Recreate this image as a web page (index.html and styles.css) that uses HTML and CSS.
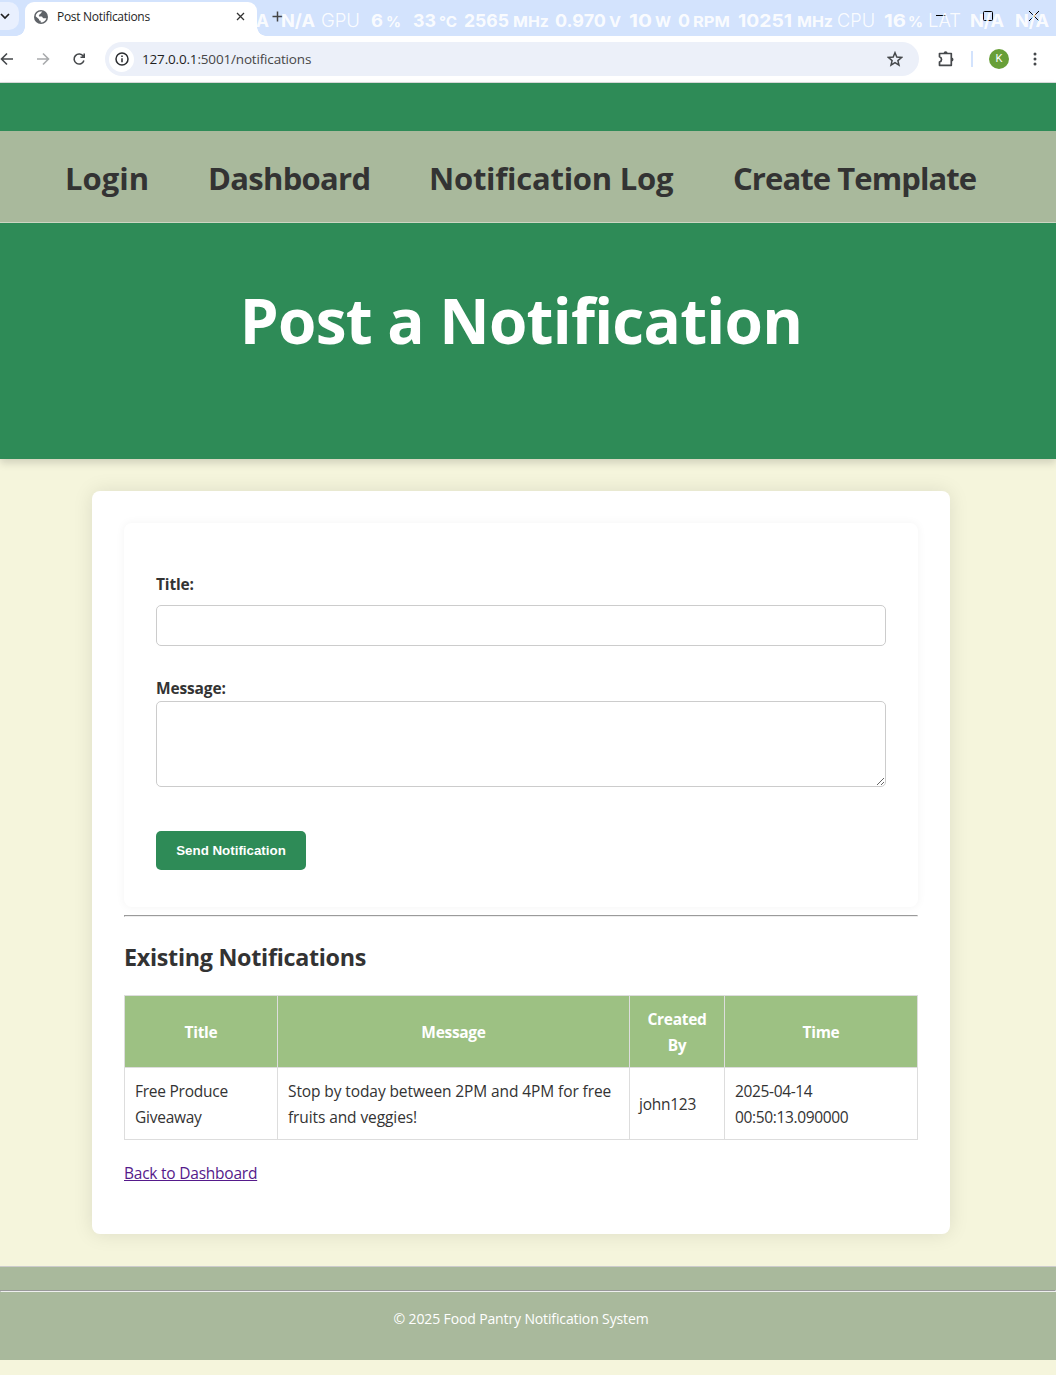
FILE: index.html
```html
<!DOCTYPE html>
<html lang="en">
<head>
<meta charset="utf-8">
<title>Post Notifications</title>
<link rel="stylesheet" href="styles.css">
</head>
<body>
<div class="browser">
  <div class="tabstrip">
    <div class="tab-search"><svg width="10" height="8" viewBox="0 0 10 8"><path d="M1 2l4 4 4-4" fill="none" stroke="#1f1f1f" stroke-width="1.7"/></svg></div>
    <div class="tab">
      <svg class="globe" width="14" height="14" viewBox="0 0 14 14"><circle cx="7" cy="7" r="7" fill="#5f6368"/><path d="M8.3 1.5C7 2.500 7.500 3.400 6.500 3.700C5.200 4 5.500 5.200 4.800 5.600L5 6.500H7.500C8.900 6.700 8.400 8.200 9.600 8.300H12.400C11.700 11 9.700 12.500 7 12.500L6.700 12.400V10.800C5.500 10.800 5 10.200 5 9.200L1.600 6.200C2 3.200 4.300 1.400 7 1.400Z" fill="#fff"/><path d="M8.300 1.700C11 2.500 12.600 4.600 12.500 7.300H10.300C10.200 5.900 9.500 5.300 8.300 5.300H6.900C7 4.300 7.500 4 8.200 3.700Z" fill="#5f6368"/></svg>
      <span class="tab-title">Post Notifications</span>
      <svg class="tab-close" width="9" height="9" viewBox="0 0 9 9"><path d="M1 1l7 7M8 1L1 8" stroke="#333" stroke-width="1.3"/></svg>
    </div>
    <svg class="new-tab" width="11" height="11" viewBox="0 0 11 11"><path d="M5.500 .5v10M.5 5.500h10" stroke="#444" stroke-width="1.5"/></svg>
    <svg class="window-controls" width="106" height="12" viewBox="0 0 106 12" fill="none" stroke="#000"><path d="M1 5.500h10"/><rect x="48.500" y="1.500" width="9" height="9" rx="1"/><path d="M94 1l10 10M104 1L94 11"/></svg>
    <svg class="monitor" width="1056" height="36" viewBox="0 0 1056 36">
      <g class="value" lengthAdjust="spacingAndGlyphs">
        <text x="256" y="27" textLength="13" lengthAdjust="spacingAndGlyphs">A</text><text x="281" y="27" textLength="34" lengthAdjust="spacingAndGlyphs">N/A</text>
        <text x="371" y="27" textLength="12" lengthAdjust="spacingAndGlyphs">6</text><text x="413" y="27" textLength="23" lengthAdjust="spacingAndGlyphs">33</text>
        <text x="464" y="27" textLength="45" lengthAdjust="spacingAndGlyphs">2565</text><text x="555" y="27" textLength="51" lengthAdjust="spacingAndGlyphs">0.970</text>
        <text x="629" y="27" textLength="23" lengthAdjust="spacingAndGlyphs">10</text><text x="678" y="27" textLength="12" lengthAdjust="spacingAndGlyphs">0</text>
        <text x="738" y="27" textLength="54" lengthAdjust="spacingAndGlyphs">10251</text><text x="884" y="27" textLength="22" lengthAdjust="spacingAndGlyphs">16</text>
        <text x="970" y="27" textLength="34" lengthAdjust="spacingAndGlyphs">N/A</text><text x="1015" y="27" textLength="34" lengthAdjust="spacingAndGlyphs">N/A</text>
      </g>
      <g class="unit">
        <text x="386" y="27" textLength="15" lengthAdjust="spacingAndGlyphs">%</text><text x="439" y="27" textLength="18" lengthAdjust="spacingAndGlyphs">°C</text>
        <text x="513" y="27" textLength="36" lengthAdjust="spacingAndGlyphs">MHz</text><text x="609" y="27" textLength="12" lengthAdjust="spacingAndGlyphs">V</text>
        <text x="655" y="27" textLength="16" lengthAdjust="spacingAndGlyphs">W</text><text x="693" y="27" textLength="37" lengthAdjust="spacingAndGlyphs">RPM</text>
        <text x="797" y="27" textLength="36" lengthAdjust="spacingAndGlyphs">MHz</text><text x="908" y="27" textLength="15" lengthAdjust="spacingAndGlyphs">%</text>
      </g>
      <g class="device">
        <text x="321" y="27" textLength="39" lengthAdjust="spacingAndGlyphs">GPU</text><text x="837" y="27" textLength="38" lengthAdjust="spacingAndGlyphs">CPU</text><text x="928" y="27" textLength="33" lengthAdjust="spacingAndGlyphs">LAT</text>
      </g>
    </svg>
  </div>
  <div class="toolbar">
    <svg class="nav-icons" width="90" height="16" viewBox="0 0 90 16" fill="none" stroke="#45484b" stroke-width="1.6"><path d="M13 8H2M7 2.500L1.500 8L7 13.500"/><path d="M37 8h11M43 2.500L48.500 8L43 13.500" stroke="#a9abad"/><path d="M83.300 5.300A5 5 0 1 0 83.900 9.500M84.200 2.500v3.700h-3.700"/></svg>
    <div class="omnibox">
      <span class="site-info"><svg width="14" height="14" viewBox="0 0 14 14" fill="none" stroke="#2b2d30" stroke-width="1.500"><circle cx="7" cy="7" r="6"/><path d="M7 6.300v4M7 3.600v1.500"/></svg></span>
      <span class="url"><span class="host">127.0.0.1</span>:5001/notifications</span>
      <svg class="star" width="16" height="16" viewBox="0 0 16 16"><path d="M8 1.700l1.800 4.400 4.700.4-3.600 3.100 1.100 4.600L8 11.700l-4 2.500 1.100-4.600L1.500 6.500l4.700-.4z" fill="none" stroke="#45484b" stroke-width="1.500"/></svg>
    </div>
    <svg class="puzzle" width="18" height="18" viewBox="0 0 18 18"><path d="M2.500 3.500H14.300V15.300H2.500V12C5.200 11 5.200 7.800 2.500 6.800Z" fill="none" stroke="#45484b" stroke-width="1.700" stroke-linejoin="round"/><path d="M6.600 3.200a2 2 0 0 1 4 0zM14.500 7.400a2 2 0 0 1 0 4z" fill="#45484b"/></svg>
    <span class="divider"></span>
    <span class="avatar">K</span>
    <svg class="menu" width="4" height="14" viewBox="0 0 4 14" fill="#45484b"><circle cx="2" cy="2" r="1.500"/><circle cx="2" cy="7" r="1.500"/><circle cx="2" cy="12" r="1.500"/></svg>
  </div>
</div>
<header class="page-header">
  <nav class="main-nav">
    <a class="nav-login">Login</a><a class="nav-dash">Dashboard</a><a class="nav-log">Notification Log</a><a class="nav-create">Create Template</a>
  </nav>
  <h1>Post a Notification</h1>
</header>
<main class="card">
  <form class="notify-form">
    <label for="title">Title:</label>
    <input id="title" type="text">
    <label class="message-label" for="message">Message:</label>
    <textarea id="message"></textarea>
    <button type="button">Send Notification</button>
  </form>
  <hr>
  <h2>Existing Notifications</h2>
  <table>
    <colgroup><col class="c-title"><col class="c-message"><col class="c-by"><col class="c-time"></colgroup>
    <tr><th>Title</th><th>Message</th><th>Created<br>By</th><th>Time</th></tr>
    <tr><td>Free Produce<br>Giveaway</td><td class="msg">Stop by today between 2PM and 4PM for free<br>fruits and veggies!</td><td class="by">john123</td><td class="time">2025-04-14<br>00:50:13.090000</td></tr>
  </table>
  <a class="back" href="#">Back to Dashboard</a>
</main>
<footer class="page-footer">
  <hr>
  <p>© 2025 Food Pantry Notification System</p>
</footer>
</body>
</html>
```
FILE: styles.css
```css
* { box-sizing: border-box; }
body {
  margin: 0;
  height: 1375px;
  overflow: hidden;
  background: #f5f5dc;
  color: #333;
  font: 15.5px/26px "Open Sans", "Noto Sans", sans-serif;
}
svg { display: block; flex: none; }

/* Browser window */
.browser { height: 83px; background: #fff; border-bottom: 1px solid #dadcdc; }
.tabstrip { position: relative; display: flex; height: 36px; background: #d3e3fd; }
.tab-search { width: 19px; height: 28px; margin-top: 2px; padding: 10px 0 0 0; background: #e9f0fe; border-radius: 0 10px 10px 0; }
.tab { position: relative; display: flex; align-items: center; width: 232px; height: 34px; margin: 2px 0 0 6px; padding: 0 12px 5px 9px; background: #fff; border-radius: 9px 9px 0 0; }
.tab::before, .tab::after { content: ""; position: absolute; bottom: 0; width: 9px; height: 9px; }
.tab::before { left: -9px; background: radial-gradient(circle at 0 0, transparent 8.5px, #fff 9px); }
.tab::after { right: -9px; background: radial-gradient(circle at 100% 0, transparent 8.5px, #fff 9px); }
.tab-title { margin-left: 9px; color: #1f1f1f; font-size: 12px; line-height: 18px; letter-spacing: -0.3px; white-space: nowrap; }
.tab-close { margin-left: auto; }
.new-tab { margin: 11px 0 0 15px; }
.window-controls { margin: 10px 15px 0 auto; }
.monitor { position: absolute; left: 0; top: 0; fill: #fff; fill-opacity: .9; font-family: Inter, sans-serif; }
.value { font-size: 18px; font-weight: 700; }
.unit { font-size: 15px; font-weight: 700; }
.device { font-size: 18.500px; font-weight: 300; }
.toolbar { display: flex; align-items: center; height: 46px; background: #fff; }
.nav-icons { margin-right: 15px; }
.omnibox { display: flex; align-items: center; width: 814px; height: 34px; padding: 0 16px 0 4px; border-radius: 17px; background: #ecf0f9; }
.site-info { display: flex; align-items: center; justify-content: center; width: 25px; height: 25px; border-radius: 50%; background: #fff; }
.url { margin-left: 8px; color: #474747; font-size: 13.500px; line-height: 20px; letter-spacing: -0.17px; }
.host { color: #1f1f1f; }
.star { margin-left: auto; }
.puzzle { margin-left: 18px; }
.divider { width: 2px; height: 16px; margin-left: 16px; background: #d3e3fd; }
.avatar { width: 20px; height: 20px; margin-left: 16px; border-radius: 50%; background: #689f38; color: #fff; text-align: center; font: 11px/20px Roboto, sans-serif; }
.menu { margin-left: 24px; }

/* Page header */
.page-header { height: 376px; padding-top: 48px; background: #2e8b57; box-shadow: 0 4px 8px rgba(0, 0, 0, .15); }
.main-nav { display: flex; height: 92px; padding: 21px 0 0 65px; border-bottom: 1px solid #ccd6c3; background: #a9b99c; font-size: 31px; font-weight: 700; line-height: 52px; white-space: nowrap; }
.nav-login { width: 143px; letter-spacing: 0; }
.nav-dash { width: 221px; letter-spacing: -.7px; }
.nav-log { width: 304px; letter-spacing: -.25px; }
.nav-create { letter-spacing: -.92px; }
h1 { margin: 46px 14px 0 0; color: #fff; font-size: 62px; line-height: 102px; letter-spacing: -.75px; text-align: center; }

/* Content card */
.card { width: 858px; height: 743px; margin: 32px 0 0 92px; padding: 32px; border-radius: 8px; background: #fff; box-shadow: 0 0 20px rgba(0, 0, 0, .1); }
.notify-form { display: flex; flex-direction: column; align-items: flex-start; height: 384px; padding: 48px 32px 0; border-radius: 8px; background: #fff; box-shadow: 0 0 10px rgba(0, 0, 0, .05); }
label { font-weight: 700; letter-spacing: -.15px; }
input { width: 100%; height: 41px; margin: 8px 0 29px; border: 1px solid #ccc; border-radius: 5px; }
textarea { width: 100%; height: 86px; margin: 0; border: 1px solid #ccc; border-radius: 5px; background: #fff; }
button { width: 150px; height: 39px; margin-top: 44px; padding: 0; border: 0; border-radius: 5px; background: #2e8b57; color: #fff; font: 700 13.333px "Liberation Sans", sans-serif; }
.card hr { margin: 8px 0 0; height: 2px; }
h2 { margin: 20px 0 0; font-size: 23.300px; line-height: 40px; letter-spacing: -.28px; }
table { width: 794px; margin-top: 18px; border-collapse: collapse; table-layout: fixed; }
.c-title { width: 153px; }
.c-message { width: 352px; }
.c-by { width: 95px; }
.c-time { width: 193px; }
th, td { height: 72px; padding: 0 10px; border: 1px solid #ddd; letter-spacing: -.25px; white-space: nowrap; }
th { background: #9dc183; color: #fff; letter-spacing: -.3px; }
.msg { letter-spacing: -.1px; }
.by { padding-left: 9px; }
.time { letter-spacing: -.35px; }
.back { display: inline-block; margin-top: 20px; color: #551a8b; letter-spacing: -.23px; }

/* Footer */
.page-footer { height: 94px; margin-top: 32px; padding-top: 23px; border-top: 1px solid #ccc; background: #a9b99c; }
.page-footer hr { margin: 0; height: 2px; }
.page-footer p { margin: 14px 14px 0 0; color: #fff; font-size: 14px; line-height: 26px; letter-spacing: -.13px; text-align: center; }
```
